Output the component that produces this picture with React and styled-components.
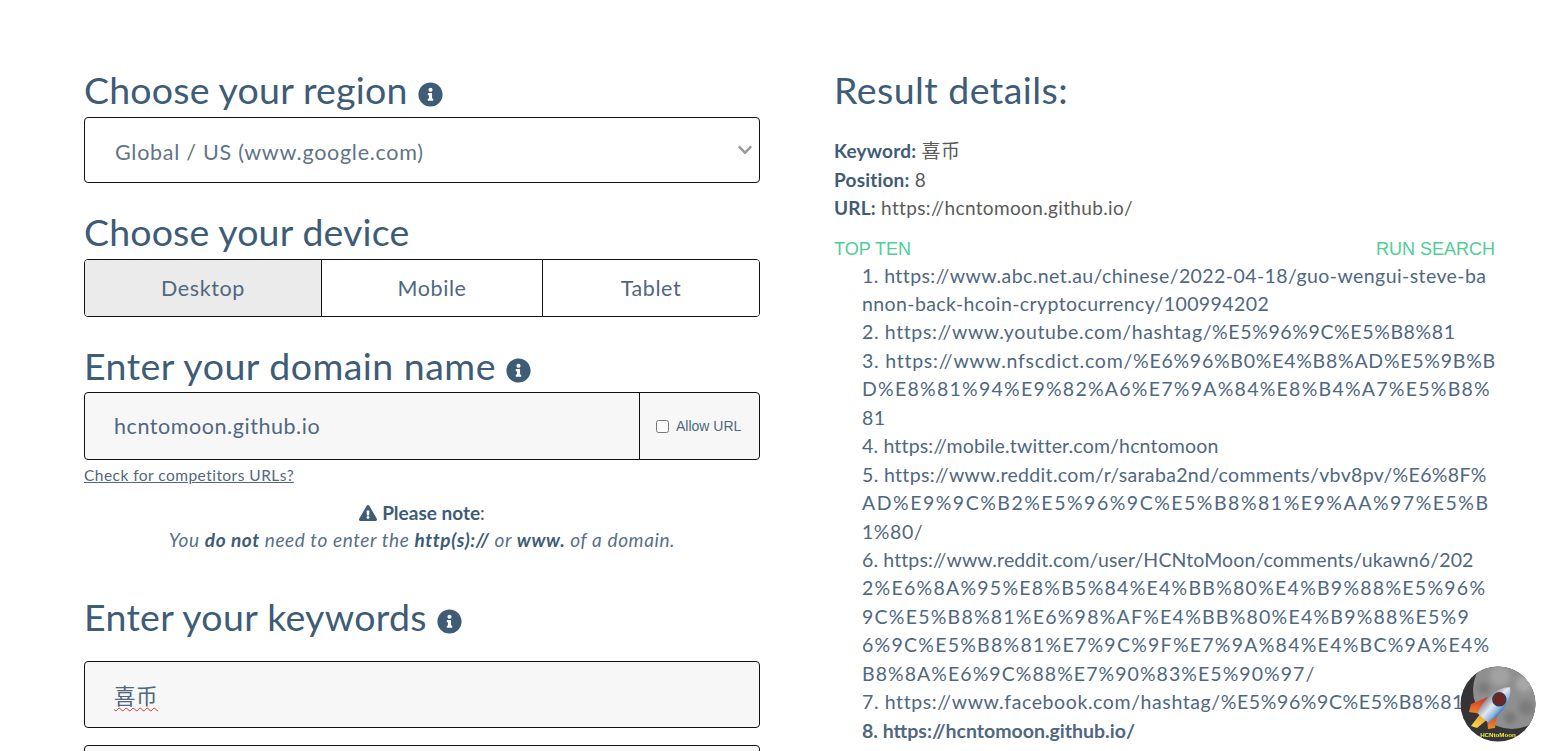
import styled, { createGlobalStyle } from 'styled-components';
import { FaInfoCircle, FaExclamationTriangle, FaChevronDown } from 'react-icons/fa';

const GlobalStyle = createGlobalStyle`
  html, body {
    margin: 0;
    height: 751px;
    overflow: hidden;
    background: #fff;
    font-family: Lato, "Noto Sans CJK SC", sans-serif;
    color: #3e5c76;
  }
`;

const Page = styled.div`
  display: grid;
  grid-template-columns: 676px 661px;
  column-gap: 74px;
  padding: 66px 0 0 84px;
`;

const Column = styled.div`
  display: flex;
  flex-direction: column;
`;

const Heading = styled.h2`
  display: flex;
  align-items: center;
  gap: 10px;
  box-sizing: border-box;
  margin: 0 0 ${(p) => (p.$flush ? 0 : 1)}px;
  height: 50px;
  padding-bottom: 3px;
  font-size: 37.5px;
  font-weight: 400;
  letter-spacing: ${(p) => p.$spacing}px;
  color: #3e5c76;

  svg {
    width: 25px;
    height: 25px;
    margin-top: 9px;
  }
`;

const SelectBox = styled.div`
  position: relative;
  display: flex;
  align-items: center;
  height: 66px;
  box-sizing: border-box;
  margin-bottom: 25px;
  padding: 3px 0 0 30px;
  border: 1px solid #111;
  border-radius: 4px;
  font-size: 21.5px;
  letter-spacing: 0.73px;
  color: #5f7486;

  svg {
    position: absolute;
    right: 6px;
    top: 24px;
    width: 16px;
    height: 16px;
    color: #9a9a9a;
  }
`;

const Tabs = styled.div`
  display: grid;
  grid-template-columns: 236px 221px 1fr;
  height: 58px;
  box-sizing: border-box;
  margin-bottom: 25px;
  border: 1px solid #111;
  border-radius: 4px;
  overflow: hidden;
`;

const Tab = styled.div`
  display: flex;
  align-items: center;
  justify-content: center;
  font-size: 21.5px;
  letter-spacing: 0.6px;
  color: #4f6880;
  background: ${(p) => (p.$active ? '#ebebeb' : '#fff')};
  border-left: ${(p) => (p.$first ? 'none' : '1px solid #111')};
`;

const InputGroup = styled.div`
  display: flex;
  height: 68px;
  box-sizing: border-box;
  border: 1px solid #111;
  border-radius: 4px;
  overflow: hidden;
  background: #f7f7f7;
`;

const TextValue = styled.div`
  flex: 1;
  display: flex;
  align-items: center;
  padding-left: 29px;
  font-size: 21.5px;
  letter-spacing: 0.56px;
  color: #4f6880;
`;

const AllowUrl = styled.label`
  display: flex;
  align-items: center;
  gap: 7px;
  width: 120px;
  box-sizing: border-box;
  padding-left: 16px;
  border-left: 1px solid #111;
  font-family: "Liberation Sans", Arial, sans-serif;
  font-size: 14px;
  color: #4f6880;

  input {
    width: 13px;
    height: 13px;
    margin: 0;
  }
`;

const CompetitorLink = styled.a`
  display: block;
  margin-top: 4px;
  font-size: 15.5px;
  line-height: 22px;
  letter-spacing: 0.46px;
  color: #4f6880;
  text-decoration: underline;
`;

const Note = styled.div`
  margin-top: 13px;
  text-align: center;
  font-size: 19px;
  line-height: 27px;
  color: #3e5c76;

  svg {
    width: 18px;
    height: 16px;
    vertical-align: -1px;
    margin-right: 5px;
  }

  i {
    display: block;
    letter-spacing: 0.6px;
    color: #56708a;
  }

  i b {
    color: #3e5c76;
  }
`;

const KeywordHeading = styled(Heading)`
  margin: 40px 0 18px;
`;

const KeywordBox = styled(InputGroup)`
  height: 67px;
  margin-bottom: 17px;
`;

const Squiggle = styled.span`
  text-decoration: underline wavy #d33 1px;
  text-underline-offset: 3px;
`;

const EmptyBox = styled(InputGroup)`
  height: 66px;
`;

const DetailList = styled.div`
  margin-top: 20px;
  font-size: 19px;
  line-height: 28.5px;
  letter-spacing: 0.35px;
  color: #5a5a5a;

  b {
    letter-spacing: 0.2px;
    color: #3e5c76;
  }
`;

const TopBar = styled.div`
  display: flex;
  justify-content: space-between;
  margin-top: 13px;
  font-family: "Liberation Sans", Arial, sans-serif;
  font-size: 18px;
  line-height: 26px;
  color: #4fce95;
`;

const ResultList = styled.div`
  padding-left: 28px;
  font-size: 19.5px;
  line-height: 28.45px;
  white-space: nowrap;
  color: #4f6880;
`;

const ResultLine = styled.div`
  font-weight: ${(p) => (p.$bold ? 700 : 400)};
  letter-spacing: ${(p) => p.$spacing}px;
`;

const RocketBadge = styled.svg`
  position: fixed;
  right: 10px;
  bottom: 9px;
  width: 76px;
  height: 76px;
`;

// the urls are cut by hand where the original column wrapped them
const results = [
  ['1. https://www.abc.net.au/chinese/2022-04-18/guo-wengui-steve-ba', 0.42],
  ['nnon-back-hcoin-cryptocurrency/100994202', 0.4],
  ['2. https://www.youtube.com/hashtag/%E5%96%9C%E5%B8%81', 0.62],
  ['3. https://www.nfscdict.com/%E6%96%B0%E4%B8%AD%E5%9B%B', 0.75],
  ['D%E8%81%94%E9%82%A6%E7%9A%84%E8%B4%A7%E5%B8%', 1.25],
  ['81', 0.55],
  ['4. https://mobile.twitter.com/hcntomoon', 0.17],
  ['5. https://www.reddit.com/r/saraba2nd/comments/vbv8pv/%E6%8F%', 0.34],
  ['AD%E9%9C%B2%E5%96%9C%E5%B8%81%E9%AA%97%E5%B', 1.5],
  ['1%80/', 0.55],
  ['6. https://www.reddit.com/user/HCNtoMoon/comments/ukawn6/202', 0.12],
  ['2%E6%8A%95%E8%B5%84%E4%BB%80%E4%B9%88%E5%96%', 1.25],
  ['9C%E5%B8%81%E6%98%AF%E4%BB%80%E4%B9%88%E5%9', 1.23],
  ['6%9C%E5%B8%81%E7%9C%9F%E7%9A%84%E4%BC%9A%E4%', 1.25],
  ['B8%8A%E6%9C%88%E7%90%83%E5%90%97/', 1.05],
  ['7. https://www.facebook.com/hashtag/%E5%96%9C%E5%B8%81/', 0.6],
];

const Rocket = () => (
  <RocketBadge viewBox="0 0 76 76">
    <defs>
      <clipPath id="disc">
        <circle cx="38" cy="38" r="37.5" />
      </clipPath>
      <filter id="soft">
        <feGaussianBlur stdDeviation="2.5" />
      </filter>
      <linearGradient id="hull" x1="0" y1="0" x2="1" y2="0">
        <stop offset="0" stopColor="#8d8f9c" />
        <stop offset="0.45" stopColor="#e2e8ef" />
        <stop offset="0.8" stopColor="#8fb7e0" />
        <stop offset="1" stopColor="#3f7fc4" />
      </linearGradient>
      <linearGradient id="fin" x1="0" y1="0" x2="0" y2="1">
        <stop offset="0" stopColor="#c9302a" />
        <stop offset="1" stopColor="#f08a2c" />
      </linearGradient>
      <linearGradient id="flame" x1="1" y1="0" x2="0" y2="1">
        <stop offset="0" stopColor="#f0902c" />
        <stop offset="1" stopColor="#f7e04a" />
      </linearGradient>
    </defs>
    <g clipPath="url(#disc)">
      <rect width="76" height="76" fill="#353537" />
      <circle cx="52" cy="24" r="39" fill="#8f8f8f" />
      <g filter="url(#soft)">
        <circle cx="40" cy="10" r="10" fill="#a2a2a2" />
        <circle cx="64" cy="18" r="8" fill="#a8a8a8" />
        <circle cx="66" cy="42" r="8" fill="#7d7d7d" />
        <circle cx="24" cy="22" r="6" fill="#7a7a7a" />
        <circle cx="50" cy="52" r="6" fill="#787878" />
      </g>
    </g>
    <path d="M28 31 L11 38 L9 46 L23 48 Z" fill="url(#fin)" />
    <path d="M21 47 L11 60 L17 62 L29 52 Z" fill="url(#flame)" />
    <path d="M38 44 L35 62 L28 63 L27 53 Z" fill="url(#fin)" />
    <g transform="rotate(42 36 37)">
      <path d="M36 16 C46 24 48 42 43 57 L29 57 C24 42 26 24 36 16 Z" fill="url(#hull)" />
      <circle cx="36" cy="32" r="6.5" fill="#6d2624" stroke="#3a3a44" strokeWidth="1.5" />
    </g>
    <text x="38" y="70.5" textAnchor="middle" fontFamily="Liberation Sans, sans-serif" fontSize="6.2" fontWeight="700" fill="#f2ea3a">
      HCNtoMoon
    </text>
  </RocketBadge>
);

export default function App() {
  return (
    <>
      <GlobalStyle />
      <Page>
        <Column>
          <Heading $spacing={0.2}>Choose your region <FaInfoCircle /></Heading>
          <SelectBox>
            Global / US (www.google.com)
            <FaChevronDown />
          </SelectBox>

          <Heading $spacing={0.15}>Choose your device</Heading>
          <Tabs>
            <Tab $active $first>Desktop</Tab>
            <Tab>Mobile</Tab>
            <Tab>Tablet</Tab>
          </Tabs>

          <Heading $flush $spacing={0.48}>Enter your domain name <FaInfoCircle /></Heading>
          <InputGroup>
            <TextValue>hcntomoon.github.io</TextValue>
            <AllowUrl>
              <input type="checkbox" />
              Allow URL
            </AllowUrl>
          </InputGroup>
          <CompetitorLink href="#">Check for competitors URLs?</CompetitorLink>

          <Note>
            <FaExclamationTriangle /><b>Please note</b>:
            <i>You <b>do not</b> need to enter the <b>http(s)://</b> or <b>www.</b> of a domain.</i>
          </Note>

          <KeywordHeading $spacing={0.3}>Enter your keywords <FaInfoCircle /></KeywordHeading>
          <KeywordBox>
            <TextValue><Squiggle>喜币</Squiggle></TextValue>
          </KeywordBox>
          <EmptyBox />
        </Column>

        <Column>
          <Heading $spacing={0.45}>Result details:</Heading>
          <DetailList>
            <div><b>Keyword:</b> 喜币</div>
            <div><b>Position:</b> 8</div>
            <div><b>URL:</b> https://hcntomoon.github.io/</div>
          </DetailList>
          <TopBar>
            <span>TOP TEN</span>
            <span>RUN SEARCH</span>
          </TopBar>
          <ResultList>
            {results.map(([line, spacing]) => (
              <ResultLine key={line} $spacing={spacing}>{line}</ResultLine>
            ))}
            <ResultLine $bold $spacing={0}>8. https://hcntomoon.github.io/</ResultLine>
          </ResultList>
        </Column>
      </Page>
      <Rocket />
    </>
  );
}
